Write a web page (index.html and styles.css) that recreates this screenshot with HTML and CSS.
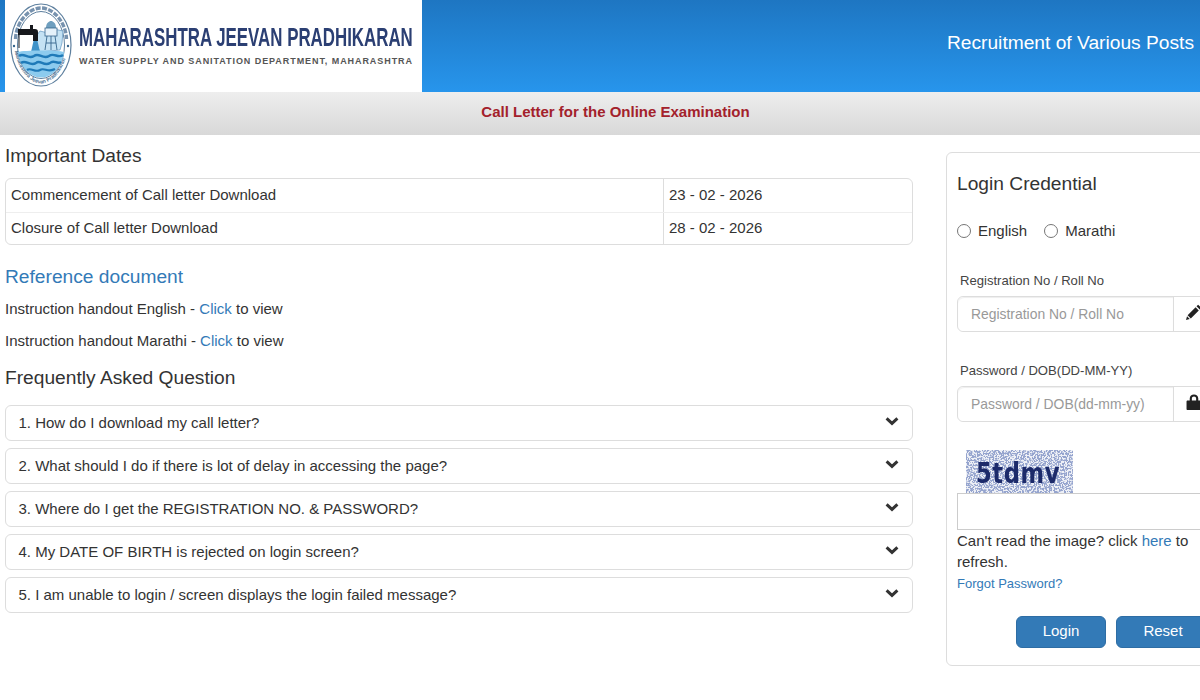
FILE: index.html
```html
<!DOCTYPE html>
<html lang="en">
<head>
    <meta charset="UTF-8">
    <meta name="viewport" content="width=device-width, initial-scale=1.0">
    <title>Call Letter for the Online Examination</title>
    <link rel="stylesheet" href="styles.css">
</head>
<body>

    <header class="top-bar">
        <div class="logo-box">
            <svg class="logo" viewBox="0 0 62 84" width="62" height="84" aria-hidden="true">
                <defs>
                    <path id="ring-text" d="M4.4 42 C5 64 19 80.4 31 80.4 C43 80.4 57 64 57.6 42"/>
                </defs>
                <ellipse cx="31" cy="42" rx="30" ry="41" fill="#fff" stroke="#5d7f9e" stroke-width="1.2"/>
                <ellipse cx="31" cy="42" rx="23.5" ry="33.5" fill="#fff" stroke="#5d7f9e" stroke-width="1"/>
                <path d="M5.5 36 C6 20 18 5 31 5 C44 5 56 20 56.5 36" fill="none" stroke="#55779a" stroke-width="3.4" stroke-dasharray="5 1.4" opacity=".8"/>
                <circle cx="4" cy="43" r="1.2" fill="#35658c"/>
                <circle cx="58" cy="43" r="1.2" fill="#35658c"/>
                <text class="logo-ring"><textPath href="#ring-text" startOffset="6">Maharashtra Jeevan Pradhikaran</textPath></text>
                <path d="M24 36 L30 28 L38 30 L44 26 L53 28 L52 40 L50 47 L30 49 Z" fill="#c4e2f4" stroke="#4a86b8" stroke-width=".6"/>
                <path d="M36 25 C36 20 39 18 41 18 C43 18 46 20 46 25 Z" fill="#6f9fbf"/>
                <rect x="35" y="25" width="12" height="8" fill="#e4f1fa" stroke="#35658c" stroke-width=".8"/>
                <path d="M37 33 L35 47 M45 33 L47 47 M36 40 L46 40 M41 33 V47" stroke="#35658c" stroke-width=".9"/>
                <path d="M8 26 H20 V22 H23 V26 H25 Q28 26 28 29 V38 H23 V32 H8 Z" fill="#16181c"/>
                <path d="M9 32 V45" fill="none" stroke="#16181c" stroke-width="1"/>
                <path d="M23.5 38 H27.5 L30 49 H21 Z" fill="#3f93c9"/>
                <path d="M8 49 C14 47 48 47 54 49 C53 62 43 74.5 31 74.5 C19 74.5 9 62 8 49 Z" fill="#8ccbee"/>
                <path d="M9 53 C14 49 18 57 24 53 C29 49 33 57 39 53 C44 49 48 56 53 52" fill="none" stroke="#1f7ab8" stroke-width="2.4"/>
                <path d="M11 60 C16 56 20 64 26 60 C30 56 34 64 40 60 C44 56 47 62 51 59" fill="none" stroke="#1f7ab8" stroke-width="2.4"/>
                <path d="M17 67 C21 64 25 70 30 67 C34 64 38 70 45 66" fill="none" stroke="#1f7ab8" stroke-width="2.2"/>
            </svg>
            <div class="logo-text">
                <span class="logo-title">MAHARASHTRA JEEVAN PRADHIKARAN</span>
                <span class="logo-sub">WATER SUPPLY AND SANITATION DEPARTMENT, MAHARASHTRA</span>
            </div>
        </div>
        <div class="top-title">Recruitment of Various Posts</div>
    </header>

    <div class="sub-bar">Call Letter for the Online Examination</div>

    <div class="page">
        <main class="content">
            <h2 class="dates-title">Important Dates</h2>
            <div class="dates">
                <div class="date-row">
                    <div class="date-name">Commencement of Call letter Download</div>
                    <div class="date-value">23 - 02 - 2026</div>
                </div>
                <div class="date-row">
                    <div class="date-name">Closure of Call letter Download</div>
                    <div class="date-value">28 - 02 - 2026</div>
                </div>
            </div>

            <h2 class="ref-title">Reference document</h2>
            <p class="ref-line">Instruction handout English - <a href="#">Click</a> to view</p>
            <p class="ref-line">Instruction handout Marathi - <a href="#">Click</a> to view</p>

            <h2 class="faq-title">Frequently Asked Question</h2>
            <div class="faq">
                <div class="faq-item">1. How do I download my call letter?
                    <svg class="chevron" viewBox="0 0 14 10" width="14" height="10" aria-hidden="true"><path d="M1.6 2.4 L7 7.4 L12.4 2.4" fill="none" stroke="#333" stroke-width="3"/></svg>
                </div>
                <div class="faq-item">2. What should I do if there is lot of delay in accessing the page?
                    <svg class="chevron" viewBox="0 0 14 10" width="14" height="10" aria-hidden="true"><path d="M1.6 2.4 L7 7.4 L12.4 2.4" fill="none" stroke="#333" stroke-width="3"/></svg>
                </div>
                <div class="faq-item">3. Where do I get the REGISTRATION NO. &amp; PASSWORD?
                    <svg class="chevron" viewBox="0 0 14 10" width="14" height="10" aria-hidden="true"><path d="M1.6 2.4 L7 7.4 L12.4 2.4" fill="none" stroke="#333" stroke-width="3"/></svg>
                </div>
                <div class="faq-item">4. My DATE OF BIRTH is rejected on login screen?
                    <svg class="chevron" viewBox="0 0 14 10" width="14" height="10" aria-hidden="true"><path d="M1.6 2.4 L7 7.4 L12.4 2.4" fill="none" stroke="#333" stroke-width="3"/></svg>
                </div>
                <div class="faq-item">5. I am unable to login / screen displays the login failed message?
                    <svg class="chevron" viewBox="0 0 14 10" width="14" height="10" aria-hidden="true"><path d="M1.6 2.4 L7 7.4 L12.4 2.4" fill="none" stroke="#333" stroke-width="3"/></svg>
                </div>
            </div>
        </main>

        <aside class="login">
            <h2 class="login-title">Login Credential</h2>

            <div class="lang">
                <label class="lang-option"><input type="radio" name="lang"> English</label>
                <label class="lang-option"><input type="radio" name="lang"> Marathi</label>
            </div>

            <label class="field-label" for="reg-no">Registration No / Roll No</label>
            <div class="input-group">
                <input type="text" id="reg-no" placeholder="Registration No / Roll No">
                <span class="addon">
                    <svg viewBox="0 0 14 14" width="16" height="16" aria-hidden="true"><path d="M10.6 0.6 L13.4 3.4 L12 4.8 L9.2 2 Z M8.4 2.8 L11.2 5.6 L4.2 12.6 L1.4 9.8 Z M0.9 10.7 L3.3 13.1 L0 14 Z" fill="#222"/></svg>
                </span>
            </div>

            <label class="field-label second" for="password">Password / DOB(DD-MM-YY)</label>
            <div class="input-group">
                <input type="text" id="password" placeholder="Password / DOB(dd-mm-yy)">
                <span class="addon">
                    <svg viewBox="0 0 14 15" width="16" height="16" aria-hidden="true"><path d="M1 6 H3 V4.2 C3 1.8 4.8 0.4 7 0.4 C9.2 0.4 11 1.8 11 4.2 V6 H13 C13.6 6 14 6.4 14 7 V14 C14 14.6 13.6 15 13 15 H1 C0.4 15 0 14.6 0 14 V7 C0 6.4 0.4 6 1 6 Z M5 6 H9 V4.2 C9 3 8.2 2.3 7 2.3 C5.8 2.3 5 3 5 4.2 Z" fill="#222"/></svg>
                </span>
            </div>

            <div class="captcha">
                <svg class="captcha-noise" width="107" height="43" aria-hidden="true">
                    <filter id="noise" x="0" y="0" width="100%" height="100%">
                        <feTurbulence type="fractalNoise" baseFrequency="0.6" numOctaves="2" seed="7"/>
                        <feColorMatrix type="matrix" values="0 0 0 0 0.30  0 0 0 0 0.37  0 0 0 0 0.62  0 0 0 10 -4.4"/>
                    </filter>
                    <rect width="107" height="43" fill="#eef0f6"/>
                    <rect width="107" height="43" filter="url(#noise)"/>
                </svg>
                <span class="captcha-text">5tdmv</span>
            </div>
            <input type="text" class="captcha-input">

            <p class="refresh">Can't read the image? click <a href="#">here</a> to<br>refresh.</p>
            <a href="#" class="forgot">Forgot Password?</a>

            <div class="actions">
                <button type="button" class="btn">Login</button>
                <button type="button" class="btn">Reset</button>
            </div>
        </aside>
    </div>

</body>
</html>
```

FILE: styles.css
```css
* {
    box-sizing: border-box;
}

html,
body {
    height: 100%;
}

body {
    margin: 0;
    overflow: hidden;
    font-family: "Liberation Sans", Arial, sans-serif;
    font-size: 15px;
    color: #333;
    background-color: #fff;
}

a {
    color: #337ab7;
    text-decoration: none;
}

h2 {
    margin: 0;
    font-size: 19.2px;
    font-weight: 400;
    line-height: 24px;
}

/* Header */
.top-bar {
    display: flex;
    align-items: stretch;
    justify-content: space-between;
    height: 92px;
    padding-left: 5px;
    background: linear-gradient(to bottom, #1e76c2, #2795ec);
}

.logo-box {
    display: flex;
    width: 417px;
    padding: 3px 0 0 5px;
    background-color: #fff;
}

.logo {
    flex-shrink: 0;
}

.logo-ring {
    font-size: 5.2px;
    font-weight: 700;
    fill: #4d7394;
}

.logo-text {
    display: flex;
    flex-direction: column;
    margin-left: 7px;
    padding-top: 20px;
    white-space: nowrap;
}

.logo-title {
    width: 335px;
    font-size: 25px;
    line-height: 28px;
    font-weight: 700;
    color: #2b3f73;
    transform: scaleX(0.675);
    transform-origin: left;
}

.logo-sub {
    margin-top: 4px;
    font-size: 9px;
    line-height: 12px;
    font-weight: 700;
    letter-spacing: 0.93px;
    color: #555;
}

.top-title {
    align-self: center;
    padding-right: 6px;
    margin-top: -6px;
    font-size: 19.2px;
    color: #fff;
}

.sub-bar {
    height: 43px;
    padding: 1px 0 0 31px;
    font-weight: 700;
    line-height: 38px;
    text-align: center;
    color: #a3212b;
    background: linear-gradient(to bottom, #eeeeee, #d8d8d8);
}

/* Page columns */
.page {
    display: flex;
    align-items: flex-start;
    padding-left: 5px;
}

.content {
    flex-shrink: 0;
    width: 908px;
}

.dates-title {
    margin-top: 9px;
}

.dates {
    height: 67px;
    margin-top: 10px;
    border: 1px solid #ddd;
    border-radius: 6px;
}

.date-row {
    display: flex;
    height: 33px;
    line-height: 31px;
}

.date-row + .date-row {
    height: 32px;
    line-height: 30px;
    border-top: 1px solid #eee;
}

.date-name {
    width: 658px;
    padding-left: 5px;
    border-right: 1px solid #ddd;
}

.date-value {
    padding-left: 5px;
}

.ref-title {
    margin-top: 20px;
    color: #337ab7;
}

.ref-line {
    margin: 9px 0 0;
    line-height: 22px;
}

.ref-line + .ref-line {
    margin-top: 10px;
}

.faq-title {
    margin-top: 14px;
}

.faq {
    display: flex;
    flex-direction: column;
    gap: 7px;
    margin-top: 15px;
}

.faq-item {
    display: flex;
    align-items: center;
    justify-content: space-between;
    height: 36px;
    padding: 0 13px 2px 12.5px;
    border: 1px solid #ddd;
    border-radius: 6px;
}

.chevron {
    margin-top: -3px;
}

/* Login panel */
.login {
    flex-shrink: 0;
    width: 290px;
    height: 514px;
    margin: 17px 0 0 33px;
    padding: 19px 0 0 10px;
    border: 1px solid #ddd;
    border-radius: 6px;
}

.lang {
    display: flex;
    gap: 17px;
    margin-top: 23px;
    line-height: 24px;
}

.lang-option {
    display: flex;
    align-items: center;
    gap: 7px;
}

.lang-option input {
    width: 14px;
    height: 14px;
    margin: 0;
}

.field-label {
    display: block;
    margin: 30px 0 0 3px;
    font-size: 13.1px;
    line-height: 16px;
    color: #444;
}

.field-label.second {
    margin-top: 31px;
}

.input-group {
    display: flex;
    width: 270px;
    height: 36px;
    margin-top: 7px;
    border: 1px solid #ddd;
    border-radius: 6px;
}

.input-group input {
    width: 216px;
    padding: 0 13px;
    border: 0;
    border-right: 1px solid #ddd;
    border-radius: 6px 0 0 6px;
    font: inherit;
    font-size: 13.9px;
    box-shadow: inset 0 1px 1px rgba(0, 0, 0, 0.07);
}

.input-group input::placeholder {
    color: #999;
    opacity: 1;
}

.addon {
    display: flex;
    align-items: center;
    padding-left: 12px;
}

.addon svg {
    margin-top: -4px;
}

.captcha {
    position: relative;
    width: 107px;
    height: 43px;
    margin: 28px 0 0 9px;
}

.captcha-noise {
    display: block;
}

.captcha-text {
    position: absolute;
    left: 10px;
    top: 5px;
    font-family: "DejaVu Sans", sans-serif;
    font-size: 29px;
    line-height: 36px;
    font-weight: 700;
    letter-spacing: 0.8px;
    color: #1c2a6a;
    transform: scaleX(0.78);
    transform-origin: left;
}

.captcha-input {
    display: block;
    width: 270px;
    height: 37px;
    border: 1px solid #ccc;
}

.refresh {
    margin: 0;
    line-height: 21px;
    white-space: nowrap;
}

.forgot {
    display: block;
    margin-top: 3px;
    font-size: 13px;
    line-height: 18px;
}

.actions {
    display: flex;
    gap: 10px;
    margin: 23px 0 0 59px;
}

.btn {
    width: 90px;
    height: 32px;
    padding-bottom: 5px;
    border: 1px solid #2e6da4;
    border-radius: 6px;
    font: inherit;
    color: #fff;
    background-color: #337ab7;
}

.btn + .btn {
    width: 94px;
}
```
